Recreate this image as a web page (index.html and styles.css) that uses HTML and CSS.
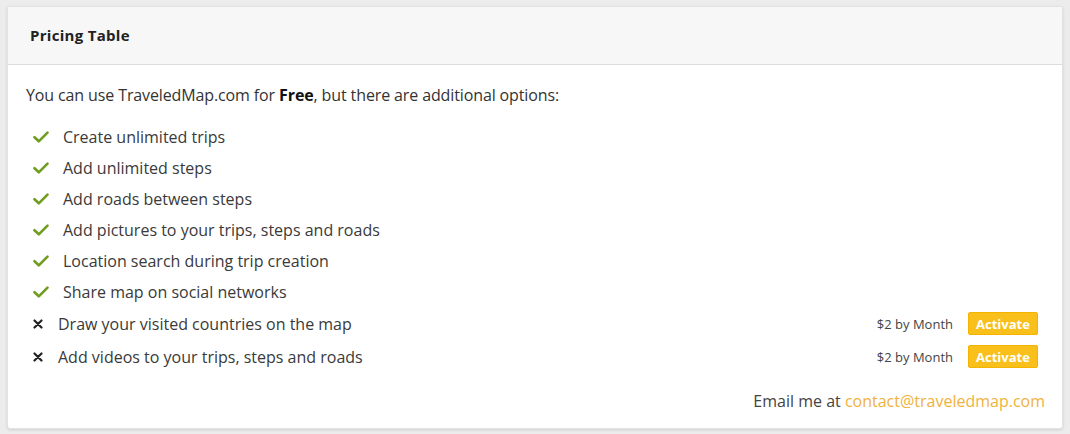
FILE: index.html
```html
<!DOCTYPE html>
<html>
<head>
<meta charset="utf-8">
<link rel="stylesheet" href="styles.css">
</head>
<body>
<div class="card">
  <div class="card-header">Pricing Table</div>
  <div class="card-body">
    <p class="intro">You can use TraveledMap.com for <b>Free</b>, but there are additional options:</p>
    <ul class="features">
      <li class="feat yes"><svg class="ico-check" viewBox="0 0 16 12" width="16" height="12"><path d="M1.5 6.2 L5.8 10.3 L14.5 1.6" fill="none" stroke="#6f9d1e" stroke-width="2.6" stroke-linecap="round" stroke-linejoin="round"/></svg><span>Create unlimited trips</span></li>
      <li class="feat yes"><svg class="ico-check" viewBox="0 0 16 12" width="16" height="12"><path d="M1.5 6.2 L5.8 10.3 L14.5 1.6" fill="none" stroke="#6f9d1e" stroke-width="2.6" stroke-linecap="round" stroke-linejoin="round"/></svg><span>Add unlimited steps</span></li>
      <li class="feat yes"><svg class="ico-check" viewBox="0 0 16 12" width="16" height="12"><path d="M1.5 6.2 L5.8 10.3 L14.5 1.6" fill="none" stroke="#6f9d1e" stroke-width="2.6" stroke-linecap="round" stroke-linejoin="round"/></svg><span>Add roads between steps</span></li>
      <li class="feat yes"><svg class="ico-check" viewBox="0 0 16 12" width="16" height="12"><path d="M1.5 6.2 L5.8 10.3 L14.5 1.6" fill="none" stroke="#6f9d1e" stroke-width="2.6" stroke-linecap="round" stroke-linejoin="round"/></svg><span>Add pictures to your trips, steps and roads</span></li>
      <li class="feat yes"><svg class="ico-check" viewBox="0 0 16 12" width="16" height="12"><path d="M1.5 6.2 L5.8 10.3 L14.5 1.6" fill="none" stroke="#6f9d1e" stroke-width="2.6" stroke-linecap="round" stroke-linejoin="round"/></svg><span>Location search during trip creation</span></li>
      <li class="feat yes"><svg class="ico-check" viewBox="0 0 16 12" width="16" height="12"><path d="M1.5 6.2 L5.8 10.3 L14.5 1.6" fill="none" stroke="#6f9d1e" stroke-width="2.6" stroke-linecap="round" stroke-linejoin="round"/></svg><span>Share map on social networks</span></li>
      <li class="feat no"><svg class="ico-cross" viewBox="0 0 10 10" width="10" height="10"><path d="M1.5 1.5 L8.5 8.5 M8.5 1.5 L1.5 8.5" fill="none" stroke="#222" stroke-width="2.2" stroke-linecap="round"/></svg><span class="label">Draw your visited countries on the map</span><span class="price">$2 by Month</span><button class="btn-activate">Activate</button></li>
      <li class="feat no"><svg class="ico-cross" viewBox="0 0 10 10" width="10" height="10"><path d="M1.5 1.5 L8.5 8.5 M8.5 1.5 L1.5 8.5" fill="none" stroke="#222" stroke-width="2.2" stroke-linecap="round"/></svg><span class="label">Add videos to your trips, steps and roads</span><span class="price">$2 by Month</span><button class="btn-activate">Activate</button></li>
    </ul>
    <p class="contact">Email me at <a href="#">contact@traveledmap.com</a></p>
  </div>
</div>
</body>
</html>
```
FILE: styles.css
```css
html, body {
  margin: 0;
  padding: 0;
}
body {
  background: #ececec;
  font-family: "Open Sans", "Liberation Sans", sans-serif;
  color: #333;
  padding: 6px 7px 3px 7px;
}
.card {
  background: #fff;
  border: 1px solid #e3e3e3;
  border-radius: 3px;
  box-shadow: 0 1px 3px rgba(0,0,0,0.12);
  height: 423px;
  box-sizing: border-box;
  display: flex;
  flex-direction: column;
}
.card-header {
  background: #f7f7f7;
  height: 58px;
  border-bottom: 1px solid #dcdcdc;
  display: flex;
  align-items: center;
  padding-left: 22px;
  padding-bottom: 1px;
  font-size: 15px;
  letter-spacing: 0.3px;
  font-weight: 700;
  color: #222;
  box-sizing: border-box;
}
.card-body {
  padding: 19px 17px 0 18px;
  flex: 1;
}
.intro {
  margin: 0;
  font-size: 16px;
  letter-spacing: -0.12px;
  line-height: 22px;
  color: #333;
}
.intro b { color: #111; }
.features {
  list-style: none;
  margin: 15px 0 0 0;
  padding: 0;
}
.feat {
  display: flex;
  align-items: center;
  font-size: 16px;
  color: #3a3a3a;
}
.feat.yes {
  height: 31px;
}
.feat.no {
  height: 33px;
}
.ico-check {
  margin-left: 7px;
  margin-right: 14px;
  flex: none;
}
.ico-cross {
  margin-left: 7px;
  margin-right: 15px;
  flex: none;
}
.feat .label {
  flex: 1;
}
.price {
  font-size: 13px;
  color: #444;
  margin-right: 15px;
}
.btn-activate {
  background: #f9c01c;
  color: #fff;
  border: 1px solid #f3b400;
  border-radius: 2px;
  font-family: inherit;
  font-size: 13px;
  font-weight: 700;
  height: 23px;
  width: 70px;
  padding: 0;
  margin-right: 7px;
}
.contact {
  margin: 17px 0 0 0;
  text-align: right;
  font-size: 16px;
  color: #444;
}
.contact a {
  color: #f0b240;
  text-decoration: none;
}
```
